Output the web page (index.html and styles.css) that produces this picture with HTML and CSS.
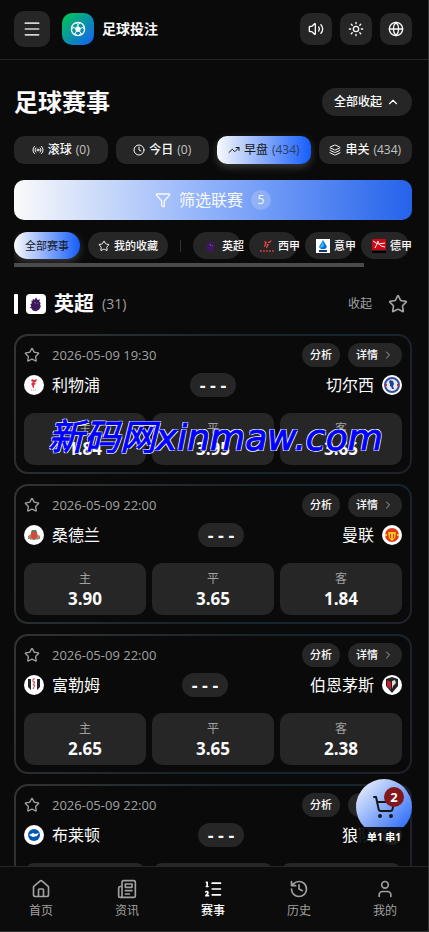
FILE: index.html
```html
<!DOCTYPE html>
<html lang="zh-CN">
  <head>
    <meta charset="utf-8">
    <meta name="viewport" content="width=device-width, initial-scale=1">
    <title>足球投注</title>
    <link rel="stylesheet" href="styles.css">
  </head>
  <body>
    <svg class="sprite" aria-hidden="true">
      <symbol id="menu" viewBox="0 0 24 24"><path d="M4 5h16M4 12h16M4 19h16"/></symbol>
      <symbol id="ball" viewBox="0 0 24 24"><circle cx="12" cy="12" r="10" stroke-width="1.800"/><path d="m12 8 4 3-1.500 4.700h-5L8 11z" fill="currentColor" stroke-width="1"/><path d="M12 8V5M16 11l3.500-1.500M14.500 15.700l2 3M9.500 15.700l-2 3M8 11L4.500 9.500M9 3l3 2 3-2M21 8l-1.500 1.500L21.500 13M3 8l1.500 1.500L2.500 13M6 20l1.500-1.300L11 21.500M18 20l-1.500-1.300L13 21.500" stroke-width="1.500"/></symbol>
      <symbol id="volume" viewBox="0 0 24 24"><path d="M11 4.702a.705.705 0 0 0-1.203-.498L6.413 7.587A1.400 1.400 0 0 1 5.416 8H3a1 1 0 0 0-1 1v6a1 1 0 0 0 1 1h2.416a1.400 1.400 0 0 1 .997.413l3.383 3.384A.705.705 0 0 0 11 19.298zM16 9a5 5 0 0 1 0 6M19.364 18.364a9 9 0 0 0 0-12.728"/></symbol>
      <symbol id="sun" viewBox="0 0 24 24"><circle cx="12" cy="12" r="4"/><path d="M12 2v2M12 20v2M4.930 4.930l1.410 1.410M17.660 17.660l1.410 1.410M2 12h2M20 12h2M6.340 17.660l-1.410 1.410M19.070 4.930l-1.410 1.410"/></symbol>
      <symbol id="globe" viewBox="0 0 24 24"><circle cx="12" cy="12" r="10"/><path d="M12 2a14.500 14.500 0 0 0 0 20 14.500 14.500 0 0 0 0-20M2 12h20"/></symbol>
      <symbol id="up" viewBox="0 0 24 24"><path d="m18 15-6-6-6 6"/></symbol>
      <symbol id="right" viewBox="0 0 24 24"><path d="m9 18 6-6-6-6"/></symbol>
      <symbol id="radio" viewBox="0 0 24 24"><path d="M4.900 19.100C1 15.200 1 8.800 4.900 4.900M7.800 16.200c-2.300-2.300-2.300-6.100 0-8.500M16.200 7.800c2.300 2.300 2.300 6.100 0 8.500M19.100 4.900C23 8.800 23 15.100 19.100 19"/><circle cx="12" cy="12" r="2"/></symbol>
      <symbol id="clock" viewBox="0 0 24 24"><circle cx="12" cy="12" r="10"/><path d="M12 6v6l4 2"/></symbol>
      <symbol id="trend" viewBox="0 0 24 24"><path d="M22 7l-8.500 8.500-5-5L2 17M16 7h6v6"/></symbol>
      <symbol id="layers" viewBox="0 0 24 24"><path d="M12.830 2.180a2 2 0 0 0-1.660 0L2.600 6.080a1 1 0 0 0 0 1.830l8.580 3.910a2 2 0 0 0 1.660 0l8.580-3.900a1 1 0 0 0 0-1.830zM2 12a1 1 0 0 0 .580.910l8.600 3.910a2 2 0 0 0 1.650 0l8.580-3.900A1 1 0 0 0 22 12M2 17a1 1 0 0 0 .580.910l8.600 3.910a2 2 0 0 0 1.650 0l8.580-3.900A1 1 0 0 0 22 17"/></symbol>
      <symbol id="funnel" viewBox="0 0 24 24"><path d="M10 20a1 1 0 0 0 .553.895l2 1A1 1 0 0 0 14 21v-7a2 2 0 0 1 .517-1.341L21.740 4.670A1 1 0 0 0 21 3H3a1 1 0 0 0-.742 1.670l7.225 7.989A2 2 0 0 1 10 14z"/></symbol>
      <symbol id="star" viewBox="0 0 24 24"><path d="M11.525 2.295a.530.530 0 0 1 .950 0l2.310 4.679a2.123 2.123 0 0 0 1.595 1.160l5.166.756a.530.530 0 0 1 .294.904l-3.736 3.638a2.123 2.123 0 0 0-.611 1.878l.882 5.140a.530.530 0 0 1-.771.560l-4.618-2.428a2.122 2.122 0 0 0-1.973 0L6.396 21.010a.530.530 0 0 1-.770-.560l.881-5.139a2.122 2.122 0 0 0-.611-1.879L2.160 9.795a.530.530 0 0 1 .294-.906l5.165-.755a2.122 2.122 0 0 0 1.597-1.160z"/></symbol>
      <symbol id="home" viewBox="0 0 24 24"><path d="M15 21v-8a1 1 0 0 0-1-1h-4a1 1 0 0 0-1 1v8M3 10a2 2 0 0 1 .709-1.528l7-6a2 2 0 0 1 2.582 0l7 6A2 2 0 0 1 21 10v9a2 2 0 0 1-2 2H5a2 2 0 0 1-2-2z"/></symbol>
      <symbol id="news" viewBox="0 0 24 24"><path d="M15 18h-5M18 14h-8M4 22h16a2 2 0 0 0 2-2V4a2 2 0 0 0-2-2H8a2 2 0 0 0-2 2v16a2 2 0 0 1-4 0v-9a2 2 0 0 1 2-2h2M10 6h8v4h-8z"/></symbol>
      <symbol id="list" viewBox="0 0 24 24"><path d="M11 5h10M11 12h10M11 19h10M4 4h1v5M4 9h2M6.500 20H3.400c0-1 2.600-1.925 2.600-3.500a1.500 1.500 0 0 0-2.600-1.020"/></symbol>
      <symbol id="history" viewBox="0 0 24 24"><path d="M3 12a9 9 0 1 0 9-9 9.750 9.750 0 0 0-6.740 2.740L3 8M3 3v5h5M12 7v5l4 2"/></symbol>
      <symbol id="user" viewBox="0 0 24 24"><path d="M19 21v-2a4 4 0 0 0-4-4H9a4 4 0 0 0-4 4v2"/><circle cx="12" cy="7" r="4"/></symbol>
      <symbol id="cart" viewBox="0 0 24 24"><circle cx="8" cy="21" r="1"/><circle cx="19" cy="21" r="1"/><path d="M2.050 2.050h2l2.660 12.420a2 2 0 0 0 2 1.580h9.780a2 2 0 0 0 1.950-1.570l1.650-7.430H5.120"/></symbol>
      <symbol id="lion" viewBox="0 0 20 20"><path fill="#3d195b" d="M6 3l2 2 2-3 2 3 3-1-1 3 2 2-1 1 1 3-2 4-4 2-4-1-2-3H2l2-2-1-3 2-1-1-3 2 0z"/><path d="M8 8l2 1M12 9l1 1" stroke="#a58cc0" stroke-width="1"/></symbol>
    </svg>

    <div class="app">
      <header class="topbar">
        <button class="square menu" aria-label="菜单"><svg class="icon"><use href="#menu"/></svg></button>
        <a class="brand" href="#"><span class="logo"><svg class="icon"><use href="#ball"/></svg></span>足球投注</a>
        <button class="square" aria-label="声音"><svg class="icon"><use href="#volume"/></svg></button>
        <button class="square" aria-label="主题"><svg class="icon"><use href="#sun"/></svg></button>
        <button class="square" aria-label="语言"><svg class="icon"><use href="#globe"/></svg></button>
      </header>

      <main>
        <div class="heading">
          <h1>足球赛事</h1>
          <button class="pill">全部收起 <svg class="icon"><use href="#up"/></svg></button>
        </div>

        <div class="tabs">
          <button><svg class="icon"><use href="#radio"/></svg>滚球 <span>(0)</span></button>
          <button><svg class="icon"><use href="#clock"/></svg>今日 <span>(0)</span></button>
          <button class="active"><svg class="icon"><use href="#trend"/></svg>早盘 <span>(434)</span></button>
          <button><svg class="icon"><use href="#layers"/></svg>串关 <span>(434)</span></button>
        </div>

        <button class="filter"><svg class="icon"><use href="#funnel"/></svg>筛选联赛 <span class="count">5</span></button>

        <div class="leagues">
          <button class="active">全部赛事</button>
          <button class="fav"><svg class="icon"><use href="#star"/></svg>我的收藏</button>
          <i class="divider"></i>
          <button class="league"><svg class="crest"><use href="#lion"/></svg>英超</button>
          <button class="league"><svg class="crest" viewBox="0 0 14 14"><path d="M4 2l3 1-2 5H4l1-4zM8 3l4-2-2 3H8zM7 5l2 0-2 4H6z" fill="#f0483e"/><path d="M0 12h14" stroke="#a83236" stroke-width="2" stroke-dasharray="2 1"/></svg>西甲</button>
          <button class="league"><svg class="crest" viewBox="0 0 14 14"><path fill="#fff" d="M0 0h14v14H0z"/><path fill="#0a68d8" d="M7 1l4 7-2 2H5L3 8z"/><path fill="#27c5f4" d="M7 2l1 5-3 2-1-1z"/><path d="M3 12h8" stroke="#163768" stroke-width="2"/></svg>意甲</button>
          <button class="league"><svg class="crest" viewBox="0 0 14 14"><path fill="#d20515" d="M0 0h14v11H0z"/><path d="M1 2l3 2 3 1 6-1M5 5L3 9M7 5l2 2 4 1" stroke="#fff" stroke-width="1" fill="none"/><circle cx="6" cy="3" r="1" fill="#fff"/><path d="M0 13h14" stroke="#000" stroke-width="2"/></svg>德甲</button>
        </div>
        <div class="track"></div>

        <section>
          <div class="group">
            <i class="mark"></i>
            <svg class="badge"><use href="#lion"/></svg>
            <h2>英超</h2><span class="total">(31)</span>
            <button class="fold">收起</button>
            <button class="star" aria-label="收藏英超"><svg class="icon"><use href="#star"/></svg></button>
          </div>

          <div class="matches">
            <article>
              <div class="info">
                <button class="star" aria-label="收藏"><svg class="icon"><use href="#star"/></svg></button>
                <time>2026-05-09 19:30</time>
                <button class="pill">分析</button>
                <button class="pill">详情<svg class="icon"><use href="#right"/></svg></button>
              </div>
              <div class="teams">
                <span class="team"><svg viewBox="0 0 20 20"><path fill="#dc2f3c" d="M8 4l2 1 3-1-1 3h-2l2 2-2 1v3H9l-1-3-1-1 2-2-2-1z"/><path d="M7 15h6" stroke="#e8808a" stroke-width="1" stroke-dasharray="1 1"/></svg>利物浦</span>
                <span class="score">- - -</span>
                <span class="team">切尔西<svg viewBox="0 0 20 20"><circle cx="10" cy="10" r="7" fill="#e8e8ee" stroke="#35509c" stroke-width="2"/><path fill="#1d4197" d="M8 5l3 1 1 3-1 2 1 3h-2l-1-3-1 1v-3L7 7z"/><path fill="#c33" d="M3 9h2v2H3zM15 9h2v2h-2z"/></svg></span>
              </div>
              <div class="odds">
                <button><small>主</small>1.84</button>
                <button><small>平</small>3.95</button>
                <button><small>客</small>3.65</button>
              </div>
              <div class="watermark">新码网xinmaw.com</div>
            </article>

            <article>
              <div class="info">
                <button class="star" aria-label="收藏"><svg class="icon"><use href="#star"/></svg></button>
                <time>2026-05-09 22:00</time>
                <button class="pill">分析</button>
                <button class="pill">详情<svg class="icon"><use href="#right"/></svg></button>
              </div>
              <div class="teams">
                <span class="team"><svg viewBox="0 0 20 20"><path fill="#d9483f" d="M7 7h6v6l-3 2-3-2z"/><path fill="#b08a64" d="M4 11l3-2v5H4zM16 11l-3-2v5h3z"/><path fill="#5f7f63" d="M8 5h4l1 2H7z"/><path d="M6 14h8" stroke="#775" stroke-width="1"/></svg>桑德兰</span>
                <span class="score">- - -</span>
                <span class="team">曼联<svg viewBox="0 0 20 20"><circle cx="10" cy="10" r="7" fill="#e0391c"/><path fill="#ffc61c" d="M6 7h8l-1 6-3 3-3-3zM3 9h2v2H3zM15 9h2v2h-2z"/><path fill="#e0391c" d="M8 9h1v4H8zM11 9h1v4h-1z"/></svg></span>
              </div>
              <div class="odds">
                <button><small>主</small>3.90</button>
                <button><small>平</small>3.65</button>
                <button><small>客</small>1.84</button>
              </div>
            </article>

            <article>
              <div class="info">
                <button class="star" aria-label="收藏"><svg class="icon"><use href="#star"/></svg></button>
                <time>2026-05-09 22:00</time>
                <button class="pill">分析</button>
                <button class="pill">详情<svg class="icon"><use href="#right"/></svg></button>
              </div>
              <div class="teams">
                <span class="team"><svg viewBox="0 0 20 20"><path fill="#222" d="M4 4h3v11l-3-3zM13 4h3v8l-3 3z"/><path d="M11 4H9v3h2l-2 3h2l-2 4" stroke="#c8404b" stroke-width="1" fill="none"/></svg>富勒姆</span>
                <span class="score">- - -</span>
                <span class="team">伯恩茅斯<svg viewBox="0 0 20 20"><path fill="#222" d="M4 4l6-2 6 2v7l-6 7-6-7z"/><path fill="#c8202f" d="M5 5l4 2v8l-4-4z"/><path fill="#ddd" d="M10 6l3-1 1 3-3 3-1 3z"/></svg></span>
              </div>
              <div class="odds">
                <button><small>主</small>2.65</button>
                <button><small>平</small>3.65</button>
                <button><small>客</small>2.38</button>
              </div>
            </article>

            <article>
              <div class="info">
                <button class="star" aria-label="收藏"><svg class="icon"><use href="#star"/></svg></button>
                <time>2026-05-09 22:00</time>
                <button class="pill">分析</button>
                <button class="pill">详情<svg class="icon"><use href="#right"/></svg></button>
              </div>
              <div class="teams">
                <span class="team"><svg viewBox="0 0 20 20"><circle cx="10" cy="10" r="6" fill="#0057b8"/><path fill="#fff" d="M5 10l4-2 2 1 4-1-2 3-4 1z"/></svg>布莱顿</span>
                <span class="score">- - -</span>
                <span class="team">狼队<svg viewBox="0 0 20 20"><path fill="#f0a52a" d="M5 5l5 2 5-2v6l-5 5-5-5z"/></svg></span>
              </div>
              <div class="odds">
                <button aria-label="主"></button>
                <button aria-label="平"></button>
                <button aria-label="客"></button>
              </div>
            </article>
          </div>
        </section>
      </main>

      <nav>
        <a href="#"><svg class="icon"><use href="#home"/></svg>首页</a>
        <a href="#"><svg class="icon"><use href="#news"/></svg>资讯</a>
        <a href="#" class="active"><svg class="icon"><use href="#list"/></svg>赛事</a>
        <a href="#"><svg class="icon"><use href="#history"/></svg>历史</a>
        <a href="#"><svg class="icon"><use href="#user"/></svg>我的</a>
      </nav>

      <button class="slip" aria-label="投注单">
        <svg class="icon"><use href="#cart"/></svg>
        <span class="num">2</span>
        <span class="kinds">单1 串1</span>
      </button>
    </div>
  </body>
</html>
```

FILE: styles.css
```css
* {
  box-sizing: border-box;
}
body {
  margin: 0;
  background-color: #0a0a0a;
  color: #fafafa;
  font: 13px/20px "Open Sans", "Noto Sans CJK SC", sans-serif;
}
button {
  display: flex;
  align-items: center;
  justify-content: center;
  padding: 0;
  border: none;
  background-color: #262626;
  color: inherit;
  font: inherit;
  white-space: nowrap;
  cursor: pointer;
}
a {
  color: inherit;
  text-decoration: none;
}
h1, h2 {
  margin: 0;
}
.sprite {
  position: absolute;
  width: 0;
  height: 0;
}
.icon {
  flex: none;
  width: 16px;
  height: 16px;
  fill: none;
  stroke: currentColor;
  stroke-width: 2;
  stroke-linecap: round;
  stroke-linejoin: round;
}
.app {
  position: relative;
  display: flex;
  flex-direction: column;
  height: 100vh;
  border-right: 1px solid #333;
  border-bottom: 1px solid #333;
}

/* top bar */
.topbar {
  display: flex;
  flex: none;
  align-items: center;
  gap: 8px;
  height: 60px;
  padding: 0 16px 2px 14px;
  border-bottom: 1px solid #262626;
}
.square {
  width: 32px;
  height: 32px;
  border-radius: 10px;
  &.menu {
    width: 36px;
    height: 36px;
    color: #d4d4d4;
    &>.icon {
      width: 20px;
      height: 20px;
    }
  }
}
.brand {
  display: flex;
  flex: 1;
  align-items: center;
  gap: 8px;
  margin-left: 4px;
  font-size: 14px;
  font-weight: bold;
}
.logo {
  display: flex;
  align-items: center;
  justify-content: center;
  width: 32px;
  height: 32px;
  border-radius: 10px;
  background: linear-gradient(135deg, #00c950, #155dfc);
}

main {
  flex: 1;
  min-height: 0;
  padding: 28px 16px 0 14px;
  overflow: hidden auto;
  scrollbar-width: none;
}
.heading {
  display: flex;
  align-items: center;
  justify-content: space-between;
  height: 28px;
  &>h1 {
    font-size: 24px;
    line-height: 28px;
  }
  &>.pill {
    height: 28px;
    padding: 0 12px;
    gap: 4px;
  }
}
.pill {
  height: 24px;
  padding: 0 8px;
  border-radius: 14px;
  font-size: 12px;
  font-weight: 500;
  &>.icon {
    width: 14px;
    height: 14px;
  }
}

.tabs {
  display: grid;
  grid-template-columns: repeat(4, 1fr);
  gap: 8px;
  margin-top: 20px;
  &>button {
    gap: 4px;
    height: 28px;
    border-radius: 10px;
    font-size: 12px;
    font-weight: 500;
    &>.icon {
      width: 12px;
      height: 12px;
    }
    &>span {
      color: #c4c4c4;
    }
    &.active>span {
      color: #2b3f6b;
    }
  }
}
.tabs>.active, .leagues>.active {
  background: linear-gradient(to right, #fafafa, #155dfc);
  box-shadow: 0 3px 8px rgba(255, 255, 255, 0.2);
  color: #171717;
  font-weight: normal;
}

.filter {
  gap: 8px;
  width: 100%;
  height: 40px;
  margin-top: 16px;
  border-radius: 10px;
  background: linear-gradient(to right, #fafafa, #8db0fa 50%, #2563eb);
  font-size: 16px;
}
.count {
  width: 20px;
  height: 20px;
  border-radius: 50%;
  background-color: rgba(255, 255, 255, 0.2);
  font-size: 12px;
}

.leagues {
  display: flex;
  align-items: center;
  gap: 8px;
  margin-top: 12px;
  margin-bottom: -9px;
  padding-bottom: 12px;
  overflow: hidden;
  &>button {
    flex: none;
    gap: 4px;
    height: 27px;
    padding: 0 11px;
    border-radius: 14px;
    font-size: 11px;
    font-weight: 500;
    &>.icon {
      width: 12px;
      height: 12px;
    }
    &.active {
      font-weight: normal;
    }
    &.fav {
      padding: 0 10px;
    }
    /* the name runs over the end of its pill */
    &.league {
      justify-content: flex-start;
      width: 48px;
    }
  }
}
.divider {
  flex: none;
  width: 1px;
  height: 12px;
  margin: 0 4px;
  background-color: #333;
}
.crest {
  flex: none;
  width: 14px;
  height: 14px;
}
.track {
  position: relative;
  width: 88%;
  height: 4px;
  margin-top: 1px;
  background-color: #4a4a4a;
}

/* league group */
.group {
  display: flex;
  align-items: center;
  gap: 8px;
  height: 28px;
  margin: 23px 0 16px;
  &>.mark {
    width: 4px;
    height: 20px;
    border-radius: 1px;
    background-color: #fff;
  }
  &>.badge {
    width: 20px;
    height: 20px;
    padding: 2px;
    border-radius: 4px;
    background-color: #fff;
  }
  &>h2 {
    font-size: 20px;
    line-height: 28px;
  }
  &>.total {
    flex: 1;
    color: #a1a1a1;
    font-size: 14px;
  }
  &>.fold {
    margin-right: 8px;
    background: none;
    color: #a1a1a1;
    font-size: 12px;
  }
  &>.star {
    margin-right: 4px;
    &>.icon {
      width: 20px;
      height: 20px;
    }
  }
}
.star {
  background: none;
  color: #a1a1a1;
}

.matches {
  display: flex;
  flex-direction: column;
  gap: 10px;
}
article {
  position: relative;
  padding: 7px 8px;
  border: 2px solid transparent;
  border-radius: 14px;
  background:
    linear-gradient(#0a0a0a, #0a0a0a) padding-box,
    linear-gradient(120deg, #333, #1b2429 50%, #14252e 70%, #211f2a) border-box;
}
.info {
  display: flex;
  align-items: center;
  gap: 8px;
  height: 24px;
  &>time {
    flex: 1;
    margin-left: 4px;
    color: #a1a1a1;
  }
  &>.pill {
    gap: 4px;
    font-size: 11px;
    &>.icon {
      width: 12px;
      height: 12px;
      color: #a1a1a1;
    }
  }
}
.teams {
  display: flex;
  align-items: center;
  justify-content: space-between;
  height: 24px;
  margin-top: 6px;
}
.team {
  display: flex;
  align-items: center;
  gap: 8px;
  font-size: 16px;
  &>svg {
    width: 20px;
    height: 20px;
    border-radius: 50%;
    background-color: #fff;
  }
}
.score {
  width: 46px;
  border-radius: 12px;
  background-color: #262626;
  font-size: 18px;
  font-weight: bold;
  line-height: 24px;
  text-align: center;
}
.odds {
  display: grid;
  grid-template-columns: repeat(3, 1fr);
  gap: 6px;
  margin-top: 16px;
  &>button {
    flex-direction: column;
    height: 52px;
    border-radius: 10px;
    font-size: 17px;
    font-weight: bold;
  }
  & small {
    color: #a1a1a1;
    font-size: 12px;
    font-weight: normal;
  }
}
.watermark {
  position: absolute;
  top: 80px;
  left: 32px;
  color: #00f;
  font: italic 36px/44px "DejaVu Sans", "Noto Sans CJK SC", sans-serif;
  white-space: nowrap;
  -webkit-text-stroke: 1px #00f;
  text-shadow: 1px 1px #fff, -1px -1px #fff, 1px -1px #fff, -1px 1px #fff;
  pointer-events: none;
}

/* bottom navigation */
nav {
  display: flex;
  flex: none;
  justify-content: space-between;
  height: 65px;
  padding: 12px 16px 0 14px;
  border-top: 1px solid #262626;
  background-color: #0c0c0c;
  &>a {
    display: flex;
    flex-direction: column;
    align-items: center;
    gap: 2px;
    width: 54px;
    color: #a1a1a1;
    font-size: 12px;
    &.active {
      color: #fff;
      font-weight: 500;
    }
    &>.icon {
      width: 20px;
      height: 20px;
    }
  }
}

/* bet slip */
.slip {
  position: absolute;
  right: 16px;
  bottom: 96px;
  width: 56px;
  height: 56px;
  border-radius: 50%;
  background: linear-gradient(135deg, #fafafa, #155dfc);
  color: #171717;
  &>.icon {
    width: 24px;
    height: 24px;
  }
  &>.num {
    position: absolute;
    top: 8px;
    right: 8px;
    width: 20px;
    height: 20px;
    border-radius: 50%;
    background-color: #82181a;
    color: #fff;
    font-weight: bold;
  }
  &>.kinds {
    position: absolute;
    top: 48px;
    left: 3px;
    width: 50px;
    border-radius: 4px;
    background-color: rgba(10, 10, 10, 0.92);
    color: #fff;
    font-size: 10px;
    font-weight: bold;
  }
}
```
